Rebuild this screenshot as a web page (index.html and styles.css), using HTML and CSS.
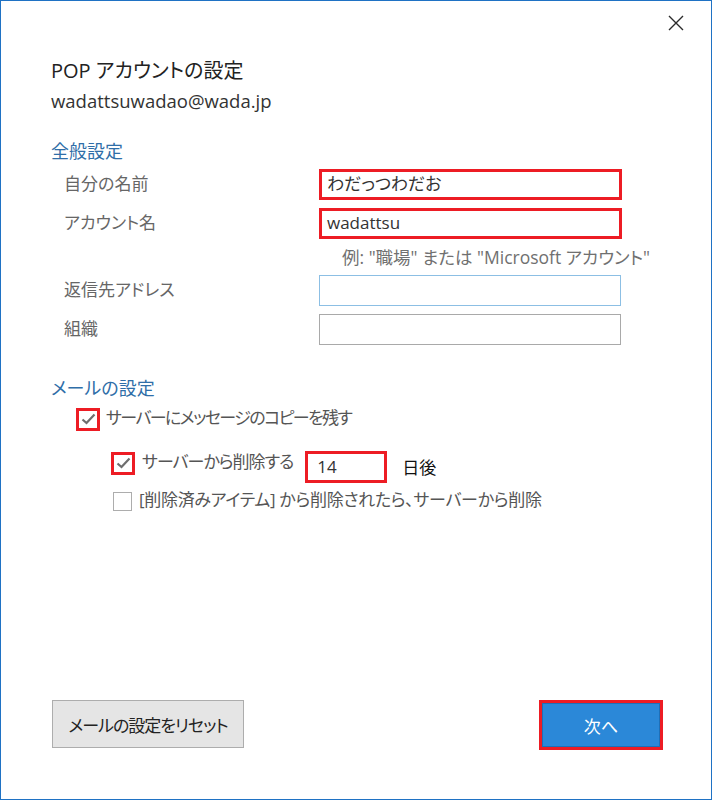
FILE: index.html
```html
<!DOCTYPE html>
<html lang="ja">
<head>
<meta charset="utf-8">
<title>POP アカウントの設定</title>
<link rel="stylesheet" href="styles.css">
</head>
<body>
<div class="window">
  <div class="titlebar">
    <button class="close" aria-label="閉じる">
      <svg width="16" height="16" viewBox="0 0 16 16"><path d="M1 1 L15 15 M15 1 L1 15" stroke="#2b2b2b" stroke-width="1.4" fill="none"/></svg>
    </button>
  </div>
  <div class="content">
    <h1 class="title">POP アカウントの設定</h1>
    <div class="email">wadattsuwadao@wada.jp</div>

    <h2 class="section">全般設定</h2>
    <div class="form">
      <div class="row row1">
        <div class="label">自分の名前</div>
        <div class="field hl">わだっつわだお</div>
      </div>
      <div class="row row2">
        <div class="label">アカウント名</div>
        <div class="field hl">wadattsu</div>
      </div>
      <div class="hint">例: "職場" または "Microsoft アカウント"</div>
      <div class="row row3">
        <div class="label">返信先アドレス</div>
        <div class="field focus"></div>
      </div>
      <div class="row row4">
        <div class="label">組織</div>
        <div class="field"></div>
      </div>
    </div>

    <h2 class="section section2">メールの設定</h2>
    <div class="check check1">
      <span class="box hlbox"><svg width="15" height="12" viewBox="0 0 15 12"><path d="M1.5 6.5 L5.5 10 L13.5 1.5" stroke="#6e6e6e" stroke-width="2.2" fill="none"/></svg></span>
      <span class="ctext">サーバーにメッセージのコピーを残す</span>
    </div>
    <div class="check check2">
      <span class="box hlbox"><svg width="15" height="12" viewBox="0 0 15 12"><path d="M1.5 6.5 L5.5 10 L13.5 1.5" stroke="#6e6e6e" stroke-width="2.2" fill="none"/></svg></span>
      <span class="ctext">サーバーから削除する</span>
      <span class="days">14</span>
      <span class="after">日後</span>
    </div>
    <div class="check check3">
      <span class="box plain"></span>
      <span class="ctext">[削除済みアイテム] から削除されたら、サーバーから削除</span>
    </div>

    <div class="buttons">
      <button class="btn reset">メールの設定をリセット</button>
      <button class="btn next">次へ</button>
    </div>
  </div>
</div>
</body>
</html>
```
FILE: styles.css
```css
* { box-sizing: border-box; }
html, body { margin: 0; padding: 0; background: #fff; }
body {
  font-family: "Open Sans", "Noto Sans CJK JP", sans-serif;
  font-feature-settings: "palt";
  color: #333;
}
.window {
  width: 712px;
  height: 800px;
  border: 1px solid #1f72c4;
  background: #fff;
  display: flex;
  flex-direction: column;
}
.titlebar {
  height: 45px;
  display: flex;
  justify-content: flex-end;
  align-items: flex-start;
}
.close {
  border: 0;
  background: transparent;
  padding: 0;
  width: 16px;
  height: 16px;
  margin: 14px 27px 0 0;
  display: flex;
}
.content {
  padding: 0 48px 0 50px;
  flex: 1;
  display: flex;
  flex-direction: column;
}
.title {
  margin: 11px 0 0 0;
  font-size: 20px;
  font-weight: normal;
  color: #222;
  line-height: 28px;
}
.email {
  margin-top: 2px;
  font-size: 18.5px;
  line-height: 28px;
  color: #333;
}
.section {
  margin: 24px 0 0 0;
  font-size: 18px;
  font-weight: normal;
  color: #2f6ea8;
  line-height: 24px;
}
.section2 { margin-top: 31px; }
.form { display: flex; flex-direction: column; margin-top: 6px; }
.row {
  display: grid;
  grid-template-columns: 268px 303px;
  align-items: center;
  height: 31px;
}
.row2 { margin-top: 8px; }
.row3 { margin-top: 6px; }
.row4 { margin-top: 8px; }
.label {
  padding-left: 13px;
  font-size: 17px;
  color: #666;
  margin-top: -5px;
}
.field {
  height: 31px;
  border: 1px solid #a9a9a9;
  padding: 0 6px;
  font-size: 17px;
  line-height: 27px;
  color: #333;
  width: 302px;
}
.field.hl { border: 3px solid #ed1c24; padding: 0 5px; line-height: 24px; width: 303px; }
.field.focus { border-color: #8cbfe4; }
.hint {
  margin: 6px 0 0 291px;
  font-size: 17.5px;
  color: #707070;
  line-height: 24px;
}
.check {
  display: flex;
  align-items: center;
  font-size: 17px;
  color: #555;
}
.check1 { margin: 7px 0 0 25px; height: 24px; }
.check2 { margin: 16px 0 0 60px; height: 32px; }
.check3 { margin: 12px 0 0 62px; height: 20px; }
.box {
  display: flex;
  align-items: center;
  justify-content: center;
  flex: none;
}
.hlbox {
  width: 24px;
  height: 23px;
  border: 3px solid #ed1c24;
}
.plain {
  width: 19px;
  height: 19px;
  border: 1px solid #adadad;
}
.ctext { margin-left: 6px; line-height: 24px; margin-top: -2px; white-space: nowrap; }
.check1 .ctext { letter-spacing: -1.6px; }
.check2 .ctext { margin-left: 7px; letter-spacing: -1px; }
.check3 .ctext { margin-left: 7px; letter-spacing: -0.3px; }
.days {
  width: 82px;
  height: 32px;
  border: 3px solid #ed1c24;
  margin-left: 12px;
  margin-top: 8px;
  padding: 0 9px;
  line-height: 26px;
  color: #333;
  flex: none;
}
.after {
  margin-left: 15px;
  color: #111;
  margin-top: 6px;
}
.buttons {
  margin-top: auto;
  margin-bottom: 49px;
  display: flex;
  justify-content: space-between;
  align-items: flex-start;
}
.btn {
  font-family: "Open Sans", "Noto Sans CJK JP", sans-serif;
  font-feature-settings: "palt";
  font-size: 17px;
  cursor: pointer;
}
.reset {
  width: 192px;
  height: 48px;
  background: #e5e5e5;
  border: 1px solid #adadad;
  color: #222;
  margin-left: 1px;
  letter-spacing: -1px;
}
.next {
  width: 124px;
  height: 50px;
  background: #2b88d8;
  border: 3px solid #ed1c24;
  color: #fff;
  box-shadow: inset 0 0 0 1px #1d6fb8;
}
```
